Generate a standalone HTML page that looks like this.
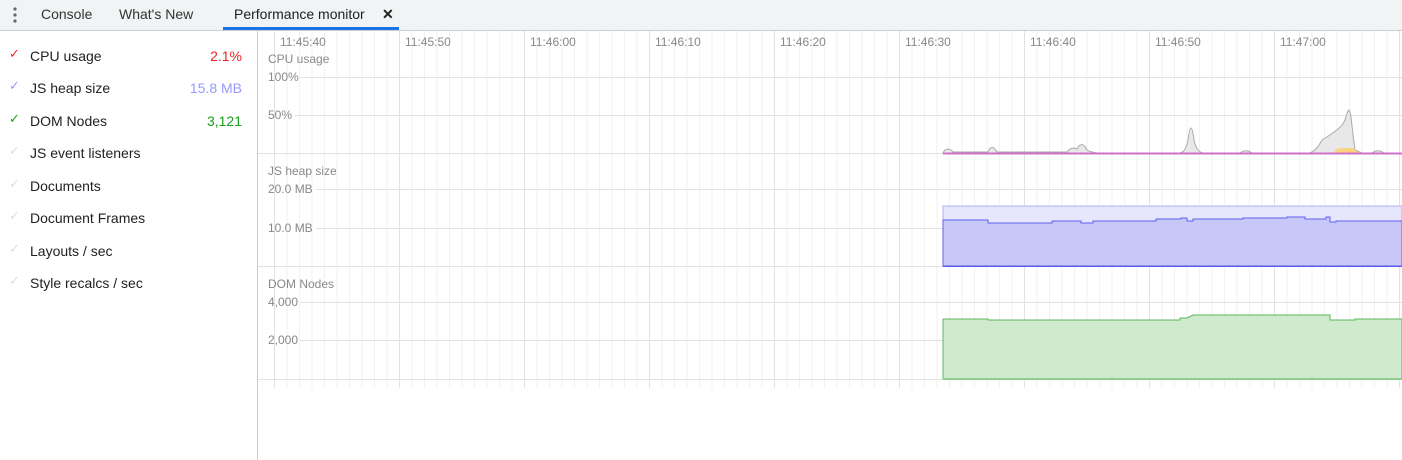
<!DOCTYPE html><html><head><style>
body{margin:0;width:1402px;height:460px;overflow:hidden;font-family:"Liberation Sans",sans-serif;background:#fff;position:relative}
.tabs{position:absolute;left:0;top:0;width:1402px;height:30px;background:#f1f3f4;border-bottom:1px solid #cbcdd1;font-size:14px;color:#333}
.tabs span{position:absolute;top:6px}
.side{position:absolute;left:0;top:31px;width:257px;height:429px;border-right:1px solid #cbcdd1}
.row{position:absolute;left:0;width:257px;font-size:14px;color:#202124}
.row .ck{position:absolute;left:9px;top:-2px;font-size:13px}
.row .n{position:absolute;left:30px}
.row .v{position:absolute;right:15px}
</style></head><body>
<div class="tabs">
<svg style="position:absolute;left:12px;top:7px" width="6" height="16"><circle cx="3" cy="2" r="1.6" fill="#666"/><circle cx="3" cy="8" r="1.6" fill="#666"/><circle cx="3" cy="14" r="1.6" fill="#666"/></svg>
<span style="left:41px">Console</span><span style="left:119px">What's New</span>
<span style="left:234px;color:#202124">Performance monitor</span><span style="left:382px;font-weight:bold;color:#222">✕</span>
<div style="position:absolute;left:223px;top:27px;width:176px;height:3px;background:#1a73e8"></div>
</div>
<div class="side">
<div class="row" style="top:17px"><span class="ck" style="color:#e22">✓</span><span class="n">CPU usage</span><span class="v" style="color:#e22">2.1%</span></div>
<div class="row" style="top:49px"><span class="ck" style="color:#99f">✓</span><span class="n">JS heap size</span><span class="v" style="color:#99f">15.8 MB</span></div>
<div class="row" style="top:82px"><span class="ck" style="color:#1a9e1a">✓</span><span class="n">DOM Nodes</span><span class="v" style="color:#1a9e1a">3,121</span></div>
<div class="row" style="top:114px"><span class="ck" style="color:#ddd">✓</span><span class="n">JS event listeners</span></div>
<div class="row" style="top:147px"><span class="ck" style="color:#ddd">✓</span><span class="n">Documents</span></div>
<div class="row" style="top:179px"><span class="ck" style="color:#ddd">✓</span><span class="n">Document Frames</span></div>
<div class="row" style="top:212px"><span class="ck" style="color:#ddd">✓</span><span class="n">Layouts / sec</span></div>
<div class="row" style="top:244px"><span class="ck" style="color:#ddd">✓</span><span class="n">Style recalcs / sec</span></div>
</div>
<svg style="position:absolute;left:0;top:0" width="1402" height="460" font-family="Liberation Sans, sans-serif" font-size="12" fill="#888">
<defs><pattern id="mn" x="274" y="0" width="12.5" height="10" patternUnits="userSpaceOnUse"><rect x="0" y="0" width="1" height="10" fill="#f2f2f2"/></pattern></defs>
<rect x="262" y="31" width="1140" height="357" fill="url(#mn)"/>
<g stroke="#e2e2e2">
<line x1="274.5" y1="31" x2="274.5" y2="388"/><line x1="399.5" y1="31" x2="399.5" y2="388"/><line x1="524.5" y1="31" x2="524.5" y2="388"/><line x1="649.5" y1="31" x2="649.5" y2="388"/><line x1="774.5" y1="31" x2="774.5" y2="388"/><line x1="899.5" y1="31" x2="899.5" y2="388"/><line x1="1024.5" y1="31" x2="1024.5" y2="388"/><line x1="1149.5" y1="31" x2="1149.5" y2="388"/><line x1="1274.5" y1="31" x2="1274.5" y2="388"/><line x1="1399.5" y1="31" x2="1399.5" y2="388"/>
<line x1="300" y1="77.5" x2="1402" y2="77.5"/><line x1="295" y1="115.5" x2="1402" y2="115.5"/><line x1="258" y1="153.5" x2="1402" y2="153.5"/>
<line x1="316" y1="189.5" x2="1402" y2="189.5"/><line x1="316" y1="228.5" x2="1402" y2="228.5"/><line x1="258" y1="266.5" x2="1402" y2="266.5"/>
<line x1="300" y1="302.5" x2="1402" y2="302.5"/><line x1="300" y1="340.5" x2="1402" y2="340.5"/><line x1="258" y1="379.5" x2="1402" y2="379.5"/>
</g>
<g fill="#888"><text x="280" y="46">11:45:40</text><text x="405" y="46">11:45:50</text><text x="530" y="46">11:46:00</text><text x="655" y="46">11:46:10</text><text x="780" y="46">11:46:20</text><text x="905" y="46">11:46:30</text><text x="1030" y="46">11:46:40</text><text x="1155" y="46">11:46:50</text><text x="1280" y="46">11:47:00</text></g>
<text x="268" y="63">CPU usage</text><text x="268" y="81">100%</text><text x="268" y="119">50%</text>
<text x="268" y="175">JS heap size</text><text x="268" y="193">20.0 MB</text><text x="268" y="232">10.0 MB</text>
<text x="268" y="288">DOM Nodes</text><text x="268" y="306">4,000</text><text x="268" y="344">2,000</text>
<path d="M943 153 C945 148 950 148 953 152 L988 152 C990 146 994 146 997 152 L1045 152 C1050 152 1050 152 1052 152 L1067 152 C1070 148 1073 147 1077 149 C1080 143 1084 143 1087 150 C1090 152 1093 152 1097 153 L1180 153 C1184 152 1186 149 1188 140 C1190 124 1192 124 1194 140 C1196 149 1199 152 1203 153 L1240 153 C1244 150 1248 150 1252 153 L1310 153 C1316 150 1318 147 1322 140 C1330 135 1338 130 1342 125 C1346 121 1347 110 1349 110 C1351 110 1352 130 1355 150 L1362 153 L1372 153 C1376 150 1380 150 1384 153 L1402 153 Z" fill="#e8e8e8" stroke="#aaa" stroke-width="1"/>
<path d="M1334 153 C1336 148 1338 148 1348 148 C1356 148 1356 150 1358 153Z" fill="#fc6" opacity=".8"/>
<line x1="943" y1="153.5" x2="1402" y2="153.5" stroke="#d070c8" stroke-width="2"/>
<rect x="943" y="206" width="459" height="60" fill="#e6e6fd" stroke="#b0b0f8" stroke-width="1"/>
<path d="M943 220 L988 220 L988 223 L1052 223 L1052 221 L1081 221 L1081 223 L1093 223 L1093 221 L1156 221 L1156 219 L1181 219 L1181 218 L1187 218 L1187 221 L1193 221 L1193 219 L1243 219 L1243 218 L1287 218 L1287 217 L1305 217 L1305 219 L1326 219 L1326 217 L1330 217 L1330 222 L1336 222 L1336 221 L1402 221 L1402 266 L943 266 Z" fill="#c8c8f8" stroke="#6060f0" stroke-width="1"/>
<line x1="943" y1="266.5" x2="1402" y2="266.5" stroke="#5a5af0"/>
<path d="M943 319 L988 319 L988 320 L1180 320 L1180 318 L1187 318 L1193 315 L1330 315 L1330 320 L1355 320 L1355 319 L1402 319 L1402 379 L943 379 Z" fill="#cfeacd" stroke="#5cb85c" stroke-width="1"/>
<line x1="943" y1="379" x2="1402" y2="379" stroke="#8fce8f" stroke-width="2"/>
</svg>
</body></html>
